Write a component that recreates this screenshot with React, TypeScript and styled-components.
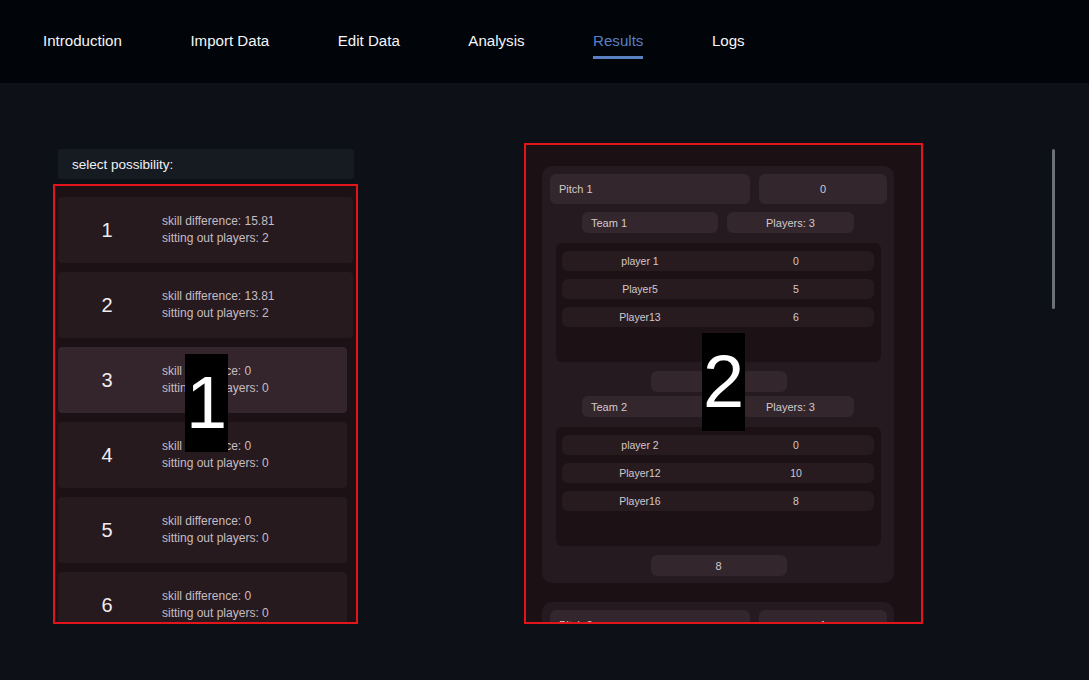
import React from "react";
import styled, { createGlobalStyle } from "styled-components";

const Global = createGlobalStyle`
  html, body { margin: 0; padding: 0; background: #0d1117; }
  body { font-family: "Liberation Sans", Arial, sans-serif; }
  * { box-sizing: border-box; }
`;

const Page = styled.div`
  width: 1089px;
  height: 680px;
  overflow: hidden;
  background: #0d1117;
  display: flex;
  flex-direction: column;
`;

const Nav = styled.nav`
  height: 83px;
  flex: none;
  background: #010409;
  display: flex;
  align-items: flex-start;
  gap: 68.5px;
  padding: 32px 0 0 43px;
`;

const NavItem = styled.div<{ $active?: boolean }>`
  font-size: 15.1px;
  line-height: 17px;
  padding-bottom: 7px;
  color: ${(p) => (p.$active ? "#5a80c4" : "#f4f6f8")};
  border-bottom: 3px solid ${(p) => (p.$active ? "#5a80c4" : "transparent")};
`;

const Main = styled.main`
  position: relative;
  flex: 1;
  display: flex;
  align-items: flex-start;
`;

const LeftColumn = styled.section`
  position: relative;
  margin: 66px 0 0 53px;
  width: 305px;
  display: flex;
  flex-direction: column;
  gap: 5px;
`;

const SelectLabel = styled.div`
  margin: 0 4px 0 5px;
  height: 30px;
  background: #161b22;
  border-radius: 3px;
  color: #eef1f4;
  font-size: 13.5px;
  display: flex;
  align-items: center;
  padding-left: 14px;
`;

const OptionList = styled.div`
  height: 440px;
  overflow: hidden;
  border: 2px solid #e3141a;
  background: #1c1115;
  padding: 11px 0 0 3px;
  display: flex;
  flex-direction: column;
  gap: 9px;
`;

const OptionCard = styled.div<{ $selected?: boolean; $wide?: boolean }>`
  flex: none;
  width: ${(p) => (p.$wide ? "295px" : "289px")};
  height: 66px;
  border-radius: 4px;
  background: ${(p) => (p.$selected ? "#33252b" : "#261a1f")};
  display: grid;
  grid-template-columns: 98px 1fr;
  column-gap: 6px;
  align-items: center;
`;

const OptionNumber = styled.div`
  text-align: center;
  font-size: 20px;
  color: #f1ecee;
`;

const OptionInfo = styled.div`
  font-size: 12px;
  line-height: 17px;
  color: #c7bdc1;
`;

const RightColumn = styled.section`
  position: relative;
  margin: 60px 0 0 166px;
  width: 399px;
`;

const PitchList = styled.div`
  height: 481px;
  overflow: hidden;
  border: 2px solid #e3141a;
  background: #1b1014;
  padding: 21px 0 0 16px;
  display: flex;
  flex-direction: column;
  gap: 19px;
`;

const PitchCard = styled.div`
  flex: none;
  width: 352px;
  background: #251a1f;
  border-radius: 10px;
  padding: 8px 7px 7px 8px;
  display: flex;
  flex-direction: column;
`;

const PitchHeader = styled.div`
  display: grid;
  grid-template-columns: 200px 1fr;
  gap: 9px;
  height: 30px;
`;

const Box = styled.div<{ $center?: boolean }>`
  background: #33262c;
  border-radius: 6px;
  color: #d2c9cc;
  font-size: 11px;
  display: flex;
  align-items: center;
  justify-content: ${(p) => (p.$center ? "center" : "flex-start")};
  padding: 0 9px;
`;

const TeamBlock = styled.div<{ $first?: boolean }>`
  margin-top: ${(p) => (p.$first ? "8px" : "4px")};
  display: flex;
  flex-direction: column;
  align-items: center;
`;

const TeamRow = styled.div`
  width: 272px;
  height: 21px;
  margin-left: -1px;
  display: grid;
  grid-template-columns: 136px 127px;
  gap: 9px;
`;

const PlayerList = styled.div`
  margin-top: 10px;
  width: 325px;
  height: 119px;
  background: #1c1216;
  border-radius: 6px;
  padding: 8px 7px 8px 6px;
  display: flex;
  flex-direction: column;
  gap: 8px;
`;

const PlayerRow = styled.div`
  height: 20px;
  background: #271b20;
  border-radius: 6px;
  display: grid;
  grid-template-columns: 1fr 1fr;
  align-items: center;
  font-size: 10.5px;
  color: #d2c9cc;
  text-align: center;
`;

const TotalBox = styled(Box)`
  margin-top: 9px;
  width: 136px;
  height: 21px;
`;

const Marker = styled.div<{ $left: number; $top: number }>`
  position: absolute;
  left: ${(p) => p.$left}px;
  top: ${(p) => p.$top}px;
  width: 43px;
  height: 98px;
  background: #000;
  color: #fff;
  font-size: 74px;
  line-height: 98px;
  text-align: center;
`;

const ScrollThumb = styled.div`
  position: absolute;
  left: 1052px;
  top: 66px;
  width: 3px;
  height: 160px;
  border-radius: 2px;
  background: #6c7078;
`;

const navItems = ["Introduction", "Import Data", "Edit Data", "Analysis", "Results", "Logs"];

const options = [
  { n: 1, skill: "15.81", out: 2 },
  { n: 2, skill: "13.81", out: 2 },
  { n: 3, skill: "0", out: 0 },
  { n: 4, skill: "0", out: 0 },
  { n: 5, skill: "0", out: 0 },
  { n: 6, skill: "0", out: 0 },
];

type Team = { name: string; players: [string, number][]; total: string };
type Pitch = { name: string; score: string; teams: Team[] };

const pitches: Pitch[] = [
  {
    name: "Pitch 1",
    score: "0",
    teams: [
      { name: "Team 1", players: [["player 1", 0], ["Player5", 5], ["Player13", 6]], total: "" },
      { name: "Team 2", players: [["player 2", 0], ["Player12", 10], ["Player16", 8]], total: "8" },
    ],
  },
  {
    name: "Pitch 2",
    score: "1",
    teams: [
      { name: "Team 1", players: [["player 3", 0], ["Player6", 4], ["Player14", 7]], total: "" },
      { name: "Team 2", players: [["player 4", 0], ["Player9", 6], ["Player15", 5]], total: "" },
    ],
  },
];

export default function App() {
  return (
    <Page>
      <Global />
      <Nav>
        {navItems.map((t) => (
          <NavItem key={t} $active={t === "Results"}>
            {t}
          </NavItem>
        ))}
      </Nav>
      <Main>
        <LeftColumn>
          <SelectLabel>select possibility:</SelectLabel>
          <OptionList>
            {options.map((o) => (
              <OptionCard key={o.n} $selected={o.n === 3} $wide={o.n <= 2}>
                <OptionNumber>{o.n}</OptionNumber>
                <OptionInfo>
                  <div>skill difference: {o.skill}</div>
                  <div>sitting out players: {o.out}</div>
                </OptionInfo>
              </OptionCard>
            ))}
          </OptionList>
          <Marker $left={132} $top={205}>1</Marker>
        </LeftColumn>
        <RightColumn>
          <PitchList>
            {pitches.map((p) => (
              <PitchCard key={p.name}>
                <PitchHeader>
                  <Box>{p.name}</Box>
                  <Box $center>{p.score}</Box>
                </PitchHeader>
                {p.teams.map((t, i) => (
                  <TeamBlock key={t.name} $first={i === 0}>
                    <TeamRow>
                      <Box>{t.name}</Box>
                      <Box $center>Players: {t.players.length}</Box>
                    </TeamRow>
                    <PlayerList>
                      {t.players.map(([name, score]) => (
                        <PlayerRow key={name}>
                          <span>{name}</span>
                          <span>{score}</span>
                        </PlayerRow>
                      ))}
                    </PlayerList>
                    <TotalBox $center>{t.total}</TotalBox>
                  </TeamBlock>
                ))}
              </PitchCard>
            ))}
          </PitchList>
          <Marker $left={178} $top={190}>2</Marker>
        </RightColumn>
        <ScrollThumb />
      </Main>
    </Page>
  );
}
